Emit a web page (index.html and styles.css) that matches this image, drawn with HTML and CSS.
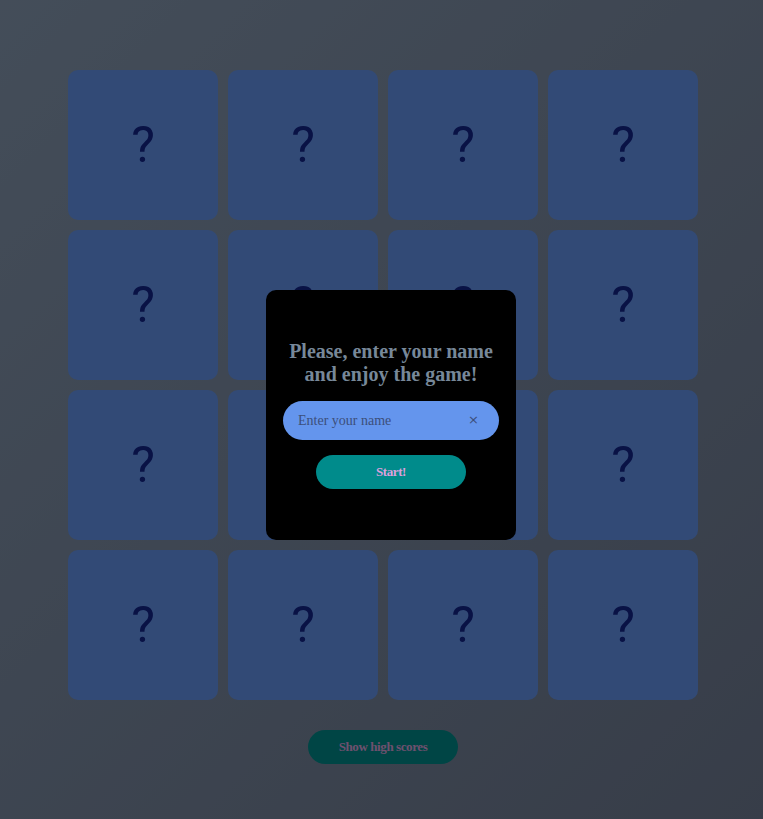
FILE: index.html
```html
<!DOCTYPE html>
<html>
<head>
<meta charset="utf-8">
<link rel="stylesheet" href="styles.css">
</head>
<body>
<main class="game">
  <div class="board">
    <div class="card">?</div><div class="card">?</div><div class="card">?</div><div class="card">?</div>
    <div class="card">?</div><div class="card">?</div><div class="card">?</div><div class="card">?</div>
    <div class="card">?</div><div class="card">?</div><div class="card">?</div><div class="card">?</div>
    <div class="card">?</div><div class="card">?</div><div class="card">?</div><div class="card">?</div>
  </div>
  <button class="scores-btn">Show high scores</button>
</main>
<div class="overlay"></div>
<div class="modal">
  <h2 class="modal-title">Please, enter your name and enjoy the game!</h2>
  <div class="name-field">
    <input class="name-input" type="text" placeholder="Enter your name">
    <span class="clear">×</span>
  </div>
  <button class="start-btn">Start!</button>
</div>
</body>
</html>
```

FILE: styles.css
```css
html, body {
  margin: 0;
  height: 100%;
}
body {
  background: linear-gradient(135deg, #889bb3 0%, #6f7b92 100%);
  font-family: "Liberation Serif", serif;
  overflow: hidden;
}
.game {
  width: 630px;
  margin: 0 0 0 68px;
  padding-top: 70px;
  display: flex;
  flex-direction: column;
  align-items: center;
}
.board {
  display: grid;
  grid-template-columns: repeat(4, 150px);
  grid-auto-rows: 150px;
  gap: 10px;
}
.card {
  background: #6495ed;
  border-radius: 10px;
  display: flex;
  align-items: center;
  justify-content: center;
  font-family: Roboto, "Open Sans", sans-serif;
  font-weight: 400;
  font-size: 50px;
  line-height: 1;
  color: #12248a;
}
.scores-btn {
  margin-top: 30px;
  width: 150px;
  height: 34px;
  border: none;
  border-radius: 17px;
  background: #008b8b;
  color: #dda0dd;
  font-family: "Liberation Serif", serif;
  font-weight: bold;
  font-size: 13px;
  letter-spacing: -0.4px;
}
.overlay {
  position: fixed;
  inset: 0;
  background: rgba(0, 0, 0, 0.5);
}
.modal {
  position: absolute;
  left: 266px;
  top: 290px;
  width: 250px;
  height: 250px;
  box-sizing: border-box;
  background: #000;
  border-radius: 10px;
  display: flex;
  flex-direction: column;
  align-items: center;
  padding: 50px 10px 0;
}
.modal-title {
  margin: 0;
  color: #778899;
  font-size: 20px;
  line-height: 23px;
  text-align: center;
  font-weight: bold;
}
.name-field {
  position: relative;
  margin-top: 15px;
  width: 216px;
  height: 39px;
}
.name-input {
  width: 100%;
  height: 100%;
  box-sizing: border-box;
  border: none;
  border-radius: 20px;
  background: #6495ed;
  padding: 0 40px 0 15px;
  font-family: "Liberation Serif", serif;
  font-size: 14px;
  outline: none;
}
.name-input::placeholder {
  color: #3c4f7a;
}
.clear {
  position: absolute;
  right: 20px;
  top: 11px;
  font-family: "DejaVu Sans", sans-serif;
  font-size: 13px;
  color: #3c4f7a;
}
.start-btn {
  margin-top: 15px;
  width: 150px;
  height: 34px;
  border: none;
  border-radius: 17px;
  background: #008b8b;
  color: #dda0dd;
  font-family: "Liberation Serif", serif;
  font-weight: bold;
  font-size: 13px;
  letter-spacing: -0.4px;
}
```
